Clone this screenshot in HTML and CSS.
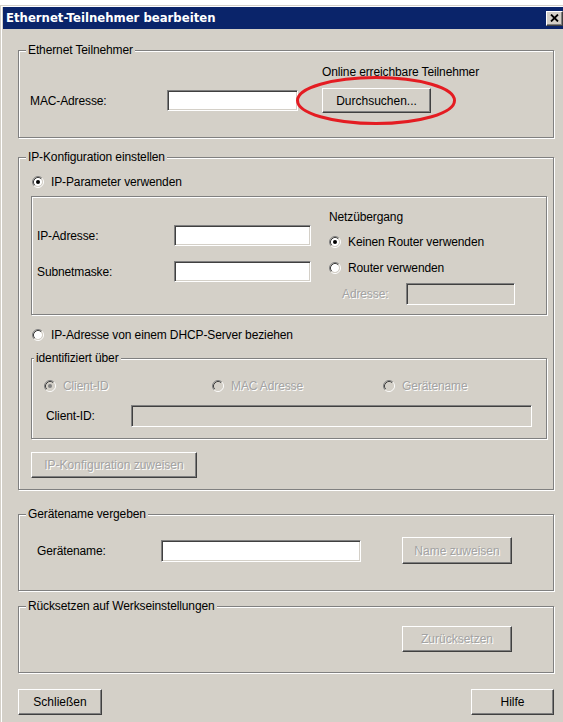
FILE: index.html
```html
<!DOCTYPE html>
<html lang="de">
<head>
<meta charset="utf-8">
<title>Ethernet-Teilnehmer bearbeiten</title>
<link rel="stylesheet" href="styles.css">
</head>
<body>
<!-- shared radio-button bevel, reused by every radio below -->
<svg class="defs" aria-hidden="true">
  <symbol id="rb" viewBox="0 0 12 12">
    <path d="M2.11 9.89 A5.5 5.5 0 0 1 9.89 2.11" stroke="#808080" fill="none"/>
    <path d="M9.89 2.11 A5.5 5.5 0 0 1 2.11 9.89" stroke="#ffffff" fill="none"/>
    <path d="M2.82 9.18 A4.5 4.5 0 0 1 9.18 2.82" stroke="#404040" fill="none"/>
    <path d="M9.18 2.82 A4.5 4.5 0 0 1 2.82 9.18" stroke="#d4d0c8" fill="none"/>
  </symbol>
</svg>

<div class="window">
  <div class="frame">
    <div class="titlebar">
      <span class="title">Ethernet-Teilnehmer bearbeiten</span>
      <span class="close"><svg width="9" height="8" viewBox="0 0 9 8"><path d="M1 0.5 L8 7.5 M8 0.5 L1 7.5" stroke="#000" stroke-width="1.8"/></svg></span>
    </div>

    <div class="client">
      <!-- Ethernet Teilnehmer -->
      <section class="group g-eth">
        <div class="group-title">Ethernet Teilnehmer</div>
        <div class="online">Online erreichbare Teilnehmer</div>
        <div class="mac-row">
          <span class="lbl w-mac">MAC-Adresse:</span>
          <input class="field f-mac" type="text">
          <span class="btn-wrap">
            <button class="btn b-search">Durchsuchen...</button>
            <svg class="mark" width="162" height="52" viewBox="0 0 162 52"><ellipse cx="81" cy="25.5" rx="78.5" ry="23" fill="none" stroke="#e41c22" stroke-width="3"/></svg>
          </span>
        </div>
      </section>

      <!-- IP-Konfiguration -->
      <section class="group g-ip">
        <div class="group-title">IP-Konfiguration einstellen</div>
        <label class="radio r-static">
          <svg class="rb" viewBox="0 0 12 12"><circle class="face" cx="6" cy="6" r="4"/><use href="#rb"/><circle class="dot" cx="6" cy="6" r="2"/></svg>
          <span>IP-Parameter verwenden</span>
        </label>

        <div class="inner">
          <div class="ip-left">
            <div class="ip-row"><span class="lbl w-ip">IP-Adresse:</span><input class="field f-ip" type="text"></div>
            <div class="ip-row"><span class="lbl w-ip">Subnetmaske:</span><input class="field f-ip" type="text"></div>
          </div>
          <div class="ip-right">
            <div>Netzübergang</div>
            <label class="radio r-gw1">
              <svg class="rb" viewBox="0 0 12 12"><circle class="face" cx="6" cy="6" r="4"/><use href="#rb"/><circle class="dot" cx="6" cy="6" r="2"/></svg>
              <span>Keinen Router verwenden</span>
            </label>
            <label class="radio off r-gw2">
              <svg class="rb" viewBox="0 0 12 12"><circle class="face" cx="6" cy="6" r="4"/><use href="#rb"/><circle class="dot" cx="6" cy="6" r="2"/></svg>
              <span>Router verwenden</span>
            </label>
            <div class="gw-row">
              <span class="lbl dis w-gw">Adresse:</span>
              <input class="field f-gw" type="text" disabled>
            </div>
          </div>
        </div>

        <label class="radio off r-dhcp">
          <svg class="rb" viewBox="0 0 12 12"><circle class="face" cx="6" cy="6" r="4"/><use href="#rb"/><circle class="dot" cx="6" cy="6" r="2"/></svg>
          <span>IP-Adresse von einem DHCP-Server beziehen</span>
        </label>

        <div class="inner ident">
          <div class="group-title t-ident">identifiziert über</div>
          <div class="id-radios">
            <label class="radio dis-radio">
              <svg class="rb" viewBox="0 0 12 12"><circle class="face" cx="6" cy="6" r="4"/><use href="#rb"/><circle class="dot" cx="6" cy="6" r="2"/></svg>
              <span class="dis">Client-ID</span>
            </label>
            <label class="radio dis-radio off">
              <svg class="rb" viewBox="0 0 12 12"><circle class="face" cx="6" cy="6" r="4"/><use href="#rb"/><circle class="dot" cx="6" cy="6" r="2"/></svg>
              <span class="dis">MAC Adresse</span>
            </label>
            <label class="radio dis-radio off">
              <svg class="rb" viewBox="0 0 12 12"><circle class="face" cx="6" cy="6" r="4"/><use href="#rb"/><circle class="dot" cx="6" cy="6" r="2"/></svg>
              <span class="dis">Gerätename</span>
            </label>
          </div>
          <div class="cid-row">
            <span class="lbl w-cid">Client-ID:</span>
            <input class="field f-cid" type="text" disabled>
          </div>
        </div>

        <button class="btn b-ipcfg" disabled>IP-Konfiguration zuweisen</button>
      </section>

      <!-- Gerätename -->
      <section class="group g-name">
        <div class="group-title">Gerätename vergeben</div>
        <div class="name-row">
          <span class="lbl w-name">Gerätename:</span>
          <input class="field f-name" type="text">
          <button class="btn b-name" disabled>Name zuweisen</button>
        </div>
      </section>

      <!-- Werkseinstellungen -->
      <section class="group g-reset">
        <div class="group-title">Rücksetzen auf Werkseinstellungen</div>
        <button class="btn b-reset" disabled>Zurücksetzen</button>
      </section>

      <div class="footer">
        <button class="btn b-close">Schließen</button>
        <button class="btn b-help">Hilfe</button>
      </div>
    </div>
  </div>
</div>
</body>
</html>
```
FILE: styles.css
```css
* { box-sizing: border-box; }

body {
  margin: 0;
  background: #ffffff;
  font: 12px/14px "Liberation Sans", Arial, sans-serif;
  letter-spacing: -0.12px;
  color: #000;
}

.defs { display: block; width: 0; height: 0; overflow: hidden; }

/* window chrome */
.window {
  margin-top: 5px;
  width: 563px;
  height: 717px;
  background: #d4d0c8;
  border-top: 1px solid #d4d0c8;
  border-left: 1px solid #d4d0c8;
}
.frame {
  height: 100%;
  border-top: 1px solid #fff;
  border-left: 1px solid #fff;
  padding-left: 1px;
}
.titlebar {
  height: 22px;
  background: #0a246a;
  display: flex;
  align-items: center;
  justify-content: space-between;
  padding: 0 0 0 3px;
}
.title {
  color: #fff;
  font: bold 11.7px/14px "DejaVu Sans", Verdana, sans-serif;
  letter-spacing: 0;
}
.close {
  width: 17px;
  height: 15px;
  display: flex;
  align-items: center;
  justify-content: center;
  background: #d4d0c8;
  border: 1px solid;
  border-color: #fff #404040 #404040 #fff;
  box-shadow: inset -1px -1px 0 #808080;
}

.client { padding: 0 9px 0 15px; }

/* etched group boxes */
.group, .inner {
  border: 1px solid #808080;
  box-shadow: inset 1px 1px 0 #fff, 1px 1px 0 #fff;
}
.group-title {
  width: max-content;
  margin: -8px 0 0 7px;
  padding: 0 2px;
  background: #d4d0c8;
  line-height: 14px;
}

/* controls */
.lbl { display: block; flex: none; }
.dis { color: #a3a3a3; text-shadow: 1px 1px 0 #fff; }

.field {
  display: block;
  flex: none;
  margin: 0;
  padding: 0 3px;
  font: inherit;
  background: #fff;
  border: 1px solid;
  border-color: #808080 #fff #fff #808080;
  box-shadow: inset 1px 1px 0 #404040, inset -1px -1px 0 #d4d0c8;
  outline: none;
}
.field:disabled { background: #d4d0c8; }

.btn {
  display: block;
  flex: none;
  margin: 0;
  padding: 0;
  font: inherit;
  color: #000;
  background: #d4d0c8;
  border: 1px solid;
  border-color: #fff #404040 #404040 #fff;
  box-shadow: inset -1px -1px 0 #808080;
  text-align: center;
}
.btn:disabled { color: #a3a3a3; text-shadow: 1px 1px 0 #fff; }

.radio {
  display: flex;
  align-items: center;
  gap: 7px;
  height: 14px;
  width: max-content;
}
.rb { width: 12px; height: 12px; flex: none; display: block; }
.rb .face { fill: #fff; }
.rb .dot { fill: #000; }
.radio.off .dot { display: none; }
.dis-radio .face { fill: #d4d0c8; }
.dis-radio .dot { fill: #808080; }

/* Ethernet Teilnehmer */
.g-eth { margin-top: 21px; padding-bottom: 24px; }
.online { margin: 8px 0 0 303px; }
.mac-row {
  display: flex;
  align-items: center;
  height: 25px;
  margin-top: 9px;
  padding-left: 11px;
}
.w-mac { width: 137px; }
.f-mac { width: 131px; height: 21px; }
.btn-wrap { position: relative; margin-left: 24px; }
.b-search { width: 109px; height: 25px; }
.mark { position: absolute; left: -27px; top: -13px; pointer-events: none; }

/* IP-Konfiguration */
.g-ip { margin-top: 19px; padding-bottom: 11px; }
.r-static { margin: 11px 0 0 13px; }
.inner {
  display: flex;
  width: 516px;
  margin: 7px 0 0 12px;
  padding-bottom: 9px;
}
.ip-left {
  display: flex;
  flex-direction: column;
  gap: 15px;
  padding: 28px 0 0 5px;
}
.ip-row { display: flex; align-items: center; }
.w-ip { width: 137px; }
.f-ip { width: 137px; height: 21px; }
.ip-right { margin-left: 18px; padding-top: 13px; }
.r-gw1 { margin-top: 11px; }
.r-gw2 { margin-top: 12px; }
.gw-row { display: flex; align-items: center; margin: 8px 0 0 13px; }
.w-gw { width: 64px; }
.f-gw { width: 109px; height: 22px; }

.r-dhcp { margin: 13px 0 0 13px; }

.ident {
  display: block;
  margin-top: 16px;
  padding-bottom: 11px;
}
.t-ident { margin-left: 2px; }
.id-radios {
  display: grid;
  grid-template-columns: 168px 171px auto;
  margin-top: 14px;
  padding-left: 12px;
}
.cid-row { display: flex; align-items: center; margin-top: 12px; padding-left: 14px; }
.w-cid { width: 85px; }
.f-cid { width: 401px; height: 22px; }

.b-ipcfg { width: 166px; height: 26px; margin: 13px 0 0 12px; }

/* Gerätename */
.g-name { margin-top: 24px; padding-bottom: 26px; }
.name-row {
  display: flex;
  align-items: center;
  height: 27px;
  margin-top: 16px;
  padding-left: 18px;
}
.w-name { width: 124px; }
.f-name { width: 200px; height: 22px; }
.b-name { width: 110px; height: 27px; margin-left: 41px; }

/* Werkseinstellungen */
.g-reset { margin-top: 15px; padding-bottom: 20px; }
.b-reset { width: 110px; height: 26px; margin: 13px 0 0 383px; }

/* dialog buttons */
.footer {
  display: flex;
  justify-content: space-between;
  margin-top: 16px;
}
.b-close { width: 84px; height: 26px; }
.b-help { width: 83px; height: 26px; }
```
